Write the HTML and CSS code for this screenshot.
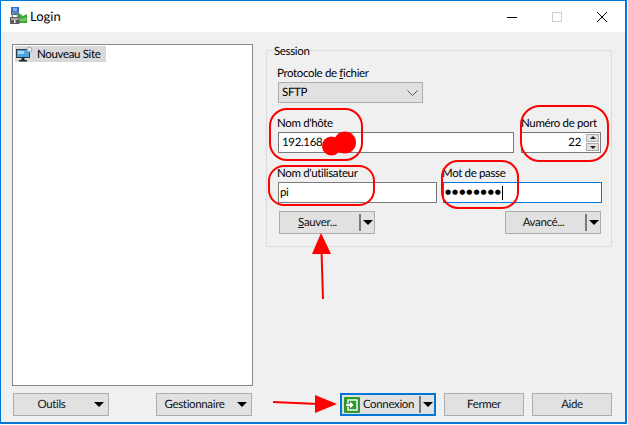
FILE: index.html
```html
<!DOCTYPE html>
<html lang="fr">
<head>
<meta charset="utf-8">
<title>Login</title>
<link rel="stylesheet" href="styles.css">
</head>
<body>
<div class="window">
  <header class="titlebar">
    <svg class="app-icon" width="18" height="18" viewBox="0 0 18 18">
      <rect x="2" y="0" width="8" height="8" fill="#2f6fd0"/>
      <rect x="4" y="1" width="4" height="3" fill="#7fb0ee"/>
      <path d="M8 8l2-2 4 3 4-2v9H8z" fill="#3da53a"/>
      <path d="M10 10l3 2 4-2v4h-7z" fill="#77c66e"/>
      <path d="M3.500 10V7.500a2.500 2.500 0 0 1 5 0V10" fill="none" stroke="#8a8a8a" stroke-width="1.400"/>
      <rect x="1" y="10" width="9.500" height="7" fill="#5d5d5d"/>
      <rect x="2" y="11" width="7.500" height="2" fill="#a8a8a8"/>
      <rect x="5" y="13" width="1.500" height="3" fill="#eee"/>
    </svg>
    <span class="title">Login</span>
    <div class="winctrls">
      <svg width="10" height="10" viewBox="0 0 10 10"><path d="M0 5.500h10" stroke="#000" stroke-width="1"/></svg>
      <svg width="10" height="10" viewBox="0 0 10 10"><rect x=".5" y=".5" width="9" height="9" fill="none" stroke="#ccc"/></svg>
      <svg width="10" height="10" viewBox="0 0 10 10"><path d="M0 0l10 10M10 0L0 10" stroke="#000" stroke-width="1"/></svg>
    </div>
  </header>

  <main class="content">
    <div class="panes">
      <aside class="tree">
        <div class="tree-item">
          <svg width="18" height="16" viewBox="0 0 18 16">
            <rect x="0.500" y="3.500" width="13" height="8" fill="#4da6dc" stroke="#2b3a4a"/>
            <rect x="2" y="5" width="6" height="3" fill="#a5d6f2"/>
            <rect x="5.500" y="12" width="3" height="2" fill="#222"/>
            <rect x="3" y="14" width="8" height="1.500" fill="#222"/>
            <circle cx="13.500" cy="3.500" r="2.400" fill="#e8eaee" stroke="#9aa2ad"/>
          </svg>
          <span class="tree-label">Nouveau Site</span>
        </div>
      </aside>

      <section class="session">
        <span class="legend">Session</span>
        <div class="field proto">
          <label class="lbl">Protocole de <u>f</u>ichier</label>
          <div class="select">
            <span>SFTP</span>
            <svg width="11" height="6" viewBox="0 0 11 6"><path d="M.5.5l5 5 5-5" fill="none" stroke="#555"/></svg>
          </div>
        </div>
        <div class="row row-host">
          <div class="field host">
            <label class="lbl">Nom d'hôte</label>
            <div class="input">192.168</div>
          </div>
          <div class="field port">
            <label class="lbl">Numéro de port</label>
            <div class="input num">
              <span class="val">22</span>
              <span class="spin">
                <span class="up"></span>
                <span class="down"></span>
              </span>
            </div>
          </div>
        </div>
        <div class="row row-user">
          <div class="field user">
            <label class="lbl">Nom d'utilisateur</label>
            <div class="input">pi</div>
          </div>
          <div class="field pass">
            <label class="lbl">Mot de passe</label>
            <div class="input focus"><span class="dots">●●●●●●●●</span><span class="caret"></span></div>
          </div>
        </div>
        <div class="row row-btns">
          <div class="btn split"><span class="txt"><u>S</u>auver...</span><span class="sep"></span><span class="tri"></span></div>
          <div class="btn split"><span class="txt">Avancé...</span><span class="sep"></span><span class="tri"></span></div>
        </div>
      </section>
    </div>

    <footer class="footer">
      <div class="footer-left">
        <div class="btn menu"><span class="txt">Outils</span><span class="tri"></span></div>
        <div class="btn menu"><span class="txt">Gestionnaire</span><span class="tri"></span></div>
      </div>
      <div class="footer-right">
        <div class="btn split primary">
          <svg width="16" height="16" viewBox="0 0 16 16">
            <rect width="16" height="16" rx="1" fill="#2e9a2c"/>
            <rect x="4" y="3" width="9" height="10" fill="none" stroke="#fff" stroke-width="1.400"/>
            <path d="M2 6.500h4V4l4 4-4 4V9.500H2z" fill="#fff" stroke="#1c7a1c" stroke-width=".5"/>
          </svg>
          <span class="txt">Connexion</span><span class="sep"></span><span class="tri"></span>
        </div>
        <div class="btn plain">Fermer</div>
        <div class="btn plain">Aide</div>
      </div>
    </footer>
  </main>
</div>

<svg class="marks" width="628" height="425" viewBox="0 0 628 425">
  <g fill="none" stroke="#f00" stroke-width="2">
    <rect x="270" y="109" width="92" height="51" rx="17"/>
    <rect x="521" y="106" width="87" height="55" rx="19"/>
    <rect x="269" y="166" width="105" height="39" rx="15"/>
    <rect x="442" y="161" width="76" height="47" rx="16"/>
    <path d="M323 299L321.500 250"/>
    <path d="M273 402L318 404"/>
  </g>
  <circle cx="331.500" cy="146" r="9.500" fill="#f00"/>
  <circle cx="345" cy="142.500" r="11" fill="#f00"/>
  <path d="M321 233l10 21h-19z" fill="#f00"/>
  <path d="M337 404l-22 9v-18z" fill="#f00"/>
</svg>
</body>
</html>
```
FILE: styles.css
```css
* { box-sizing: border-box; }
html, body { margin: 0; padding: 0; }
body {
  width: 628px;
  height: 425px;
  overflow: hidden;
  background: #fff;
  font-family: Lato, Roboto, sans-serif;
  font-size: 11.500px;
  letter-spacing: -0.35px;
  text-rendering: geometricPrecision;
  color: #000;
  position: relative;
}
.window {
  width: 627px;
  height: 424px;
  border: 1px solid #0078d7;
  border-width: 1px 2px 2px 1px;
  display: flex;
  flex-direction: column;
  background: #f0f0f0;
}
.titlebar {
  height: 31px;
  background: #fff;
  display: flex;
  align-items: center;
  padding-left: 8px;
  flex: none;
}
.app-icon { margin-right: 3px; margin-top: -1px; }
.title { font-size: 13px; letter-spacing: 0; margin-top: -1px; }
.winctrls {
  margin-left: auto;
  display: flex;
  gap: 35px;
  padding-right: 18px;
  align-items: center;
}
.content {
  flex: 1;
  display: flex;
  flex-direction: column;
  padding: 12px 13px 6px 11px;
}
.panes {
  display: flex;
  gap: 13px;
  height: 342px;
  flex: none;
}
.tree {
  width: 241px;
  height: 342px;
  background: #fff;
  border: 1px solid #828790;
  padding: 1px 2px;
  flex: none;
}
.tree-item {
  width: 91px;
  height: 16px;
  background: #d9d9d9;
  display: flex;
  align-items: center;
  gap: 3px;
  padding-left: 1px;
  color: #001;
  line-height: 16px;
  white-space: nowrap;
}
.tree-label { margin-top: 1px; }
.session {
  position: relative;
  width: 346px;
  height: 197px;
  margin-top: 6px;
  border: 1px solid #dcdcdc;
  padding: 14px 10px 0 11px;
  display: flex;
  flex-direction: column;
}
.legend {
  position: absolute;
  left: 6px;
  top: -6px;
  background: #f0f0f0;
  padding: 0 1px;
  line-height: 14px;
}
.field { display: flex; flex-direction: column; }
.lbl { line-height: 17px; height: 17px; margin-left: -1px; white-space: nowrap; }
.lbl u { text-decoration-thickness: 1px; }
.select {
  width: 145px;
  height: 21px;
  background: #e1e1e1;
  border: 1px solid #adadad;
  display: flex;
  align-items: center;
  justify-content: space-between;
  padding: 0 4px 0 3px;
}
.row { display: flex; justify-content: space-between; }
.row-host { margin-top: 12px; }
.row-user { margin-top: 12px; }
.input {
  height: 21px;
  background: #fff;
  border: 1px solid #7a7a7a;
  padding-left: 3px;
  display: flex;
  align-items: center;
  line-height: 19px;
}
.host .input { width: 236px; }
.port { width: 80px; }
.port .lbl { margin-left: 0; }
.port .input { width: 80px; }
.num { justify-content: flex-end; padding: 0 1px 0 0; }
.num .val { margin-right: 5px; }
.spin { display: flex; flex-direction: column; gap: 1px; width: 13px; height: 17px; }
.spin span { flex: 1; background: #e1e1e1; border: 1px solid #adadad; position: relative; }
.spin span::after {
  content: "";
  position: absolute;
  left: 2.500px;
  border-left: 3px solid transparent;
  border-right: 3px solid transparent;
}
.spin .up::after { top: 1px; border-bottom: 3px solid #222; }
.spin .down::after { top: 2px; border-top: 3px solid #222; }
.user .input { width: 159px; padding-left: 1px; }
.pass .input { width: 159px; padding-left: 1px; }
.pass { margin-right: -1px; }
.input.focus { border-color: #0078d7; }
.dots { font-size: 7px; letter-spacing: 1px; font-family: "DejaVu Sans", sans-serif; }
.caret { width: 1px; height: 14px; background: #000; margin-left: 0; }
.row-btns { margin-top: 8px; padding: 0 0 0 1px; }
.btn {
  width: 96px;
  height: 23px;
  background: #e1e1e1;
  border: 1px solid #adadad;
  display: flex;
  align-items: center;
  justify-content: center;
  color: #111;
  flex: none;
}
.btn .txt { white-space: nowrap; }
.tri {
  width: 0;
  height: 0;
  border-left: 5px solid transparent;
  border-right: 5px solid transparent;
  border-top: 5px solid #000;
  flex: none;
}
.sep { width: 2px; height: 17px; background: #7a7a7a; flex: none; }
.split { justify-content: flex-start; }
.split .txt { flex: 1; text-align: center; padding-right: 4px; }
.split .sep { margin-right: 2px; }
.split .tri { margin-right: 1px; }
.menu .txt { flex: 1; text-align: center; padding-right: 8px; padding-left: 3px; }
.menu .tri { margin-right: 4px; }
.footer {
  display: flex;
  justify-content: space-between;
  margin-top: 7px;
}
.footer-left { display: flex; gap: 47px; padding-left: 1px; }
.footer-right { display: flex; gap: 8px; }
.primary { border: 2px solid #0078d7; padding-left: 2px; }
.primary .txt { padding-right: 2px; }
.plain { width: 80px; }
.marks { position: absolute; left: 0; top: 0; pointer-events: none; }
```
